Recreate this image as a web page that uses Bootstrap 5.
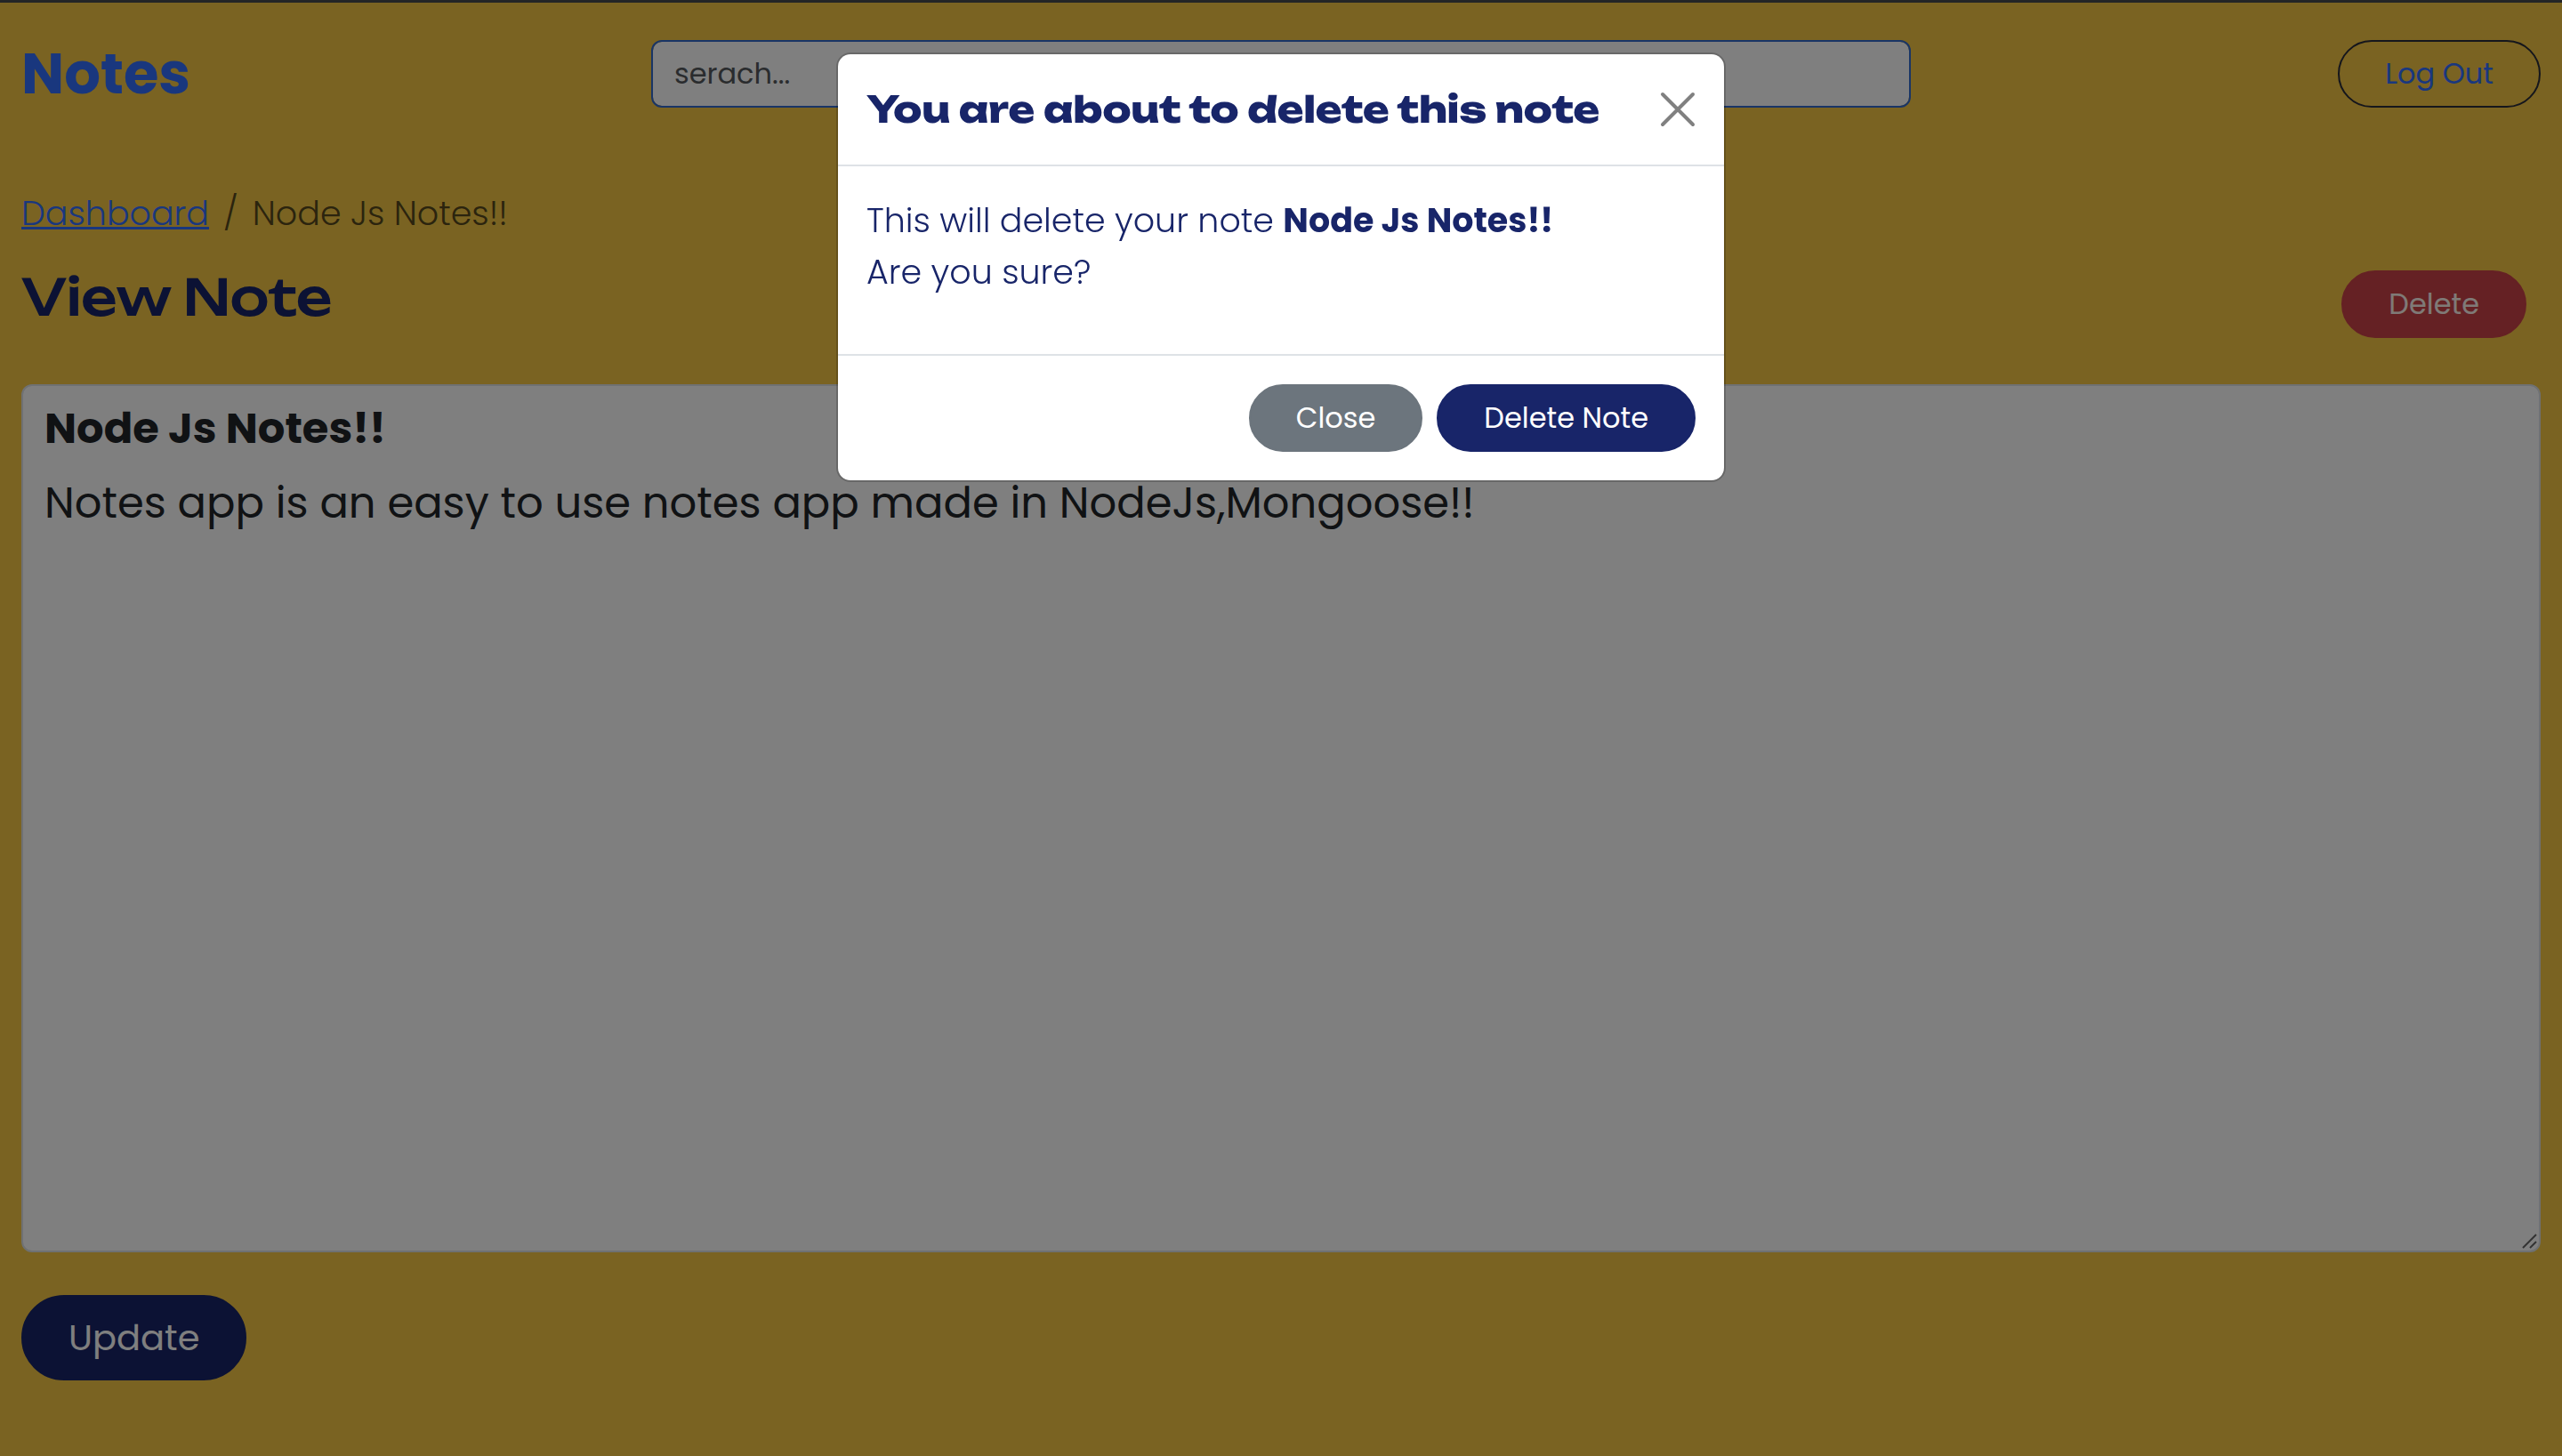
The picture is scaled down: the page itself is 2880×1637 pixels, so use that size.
<!DOCTYPE html>
<html lang="en">
<head>
<meta charset="utf-8">
<meta name="viewport" content="width=device-width, initial-scale=1">
<title>View Note</title>
<link href="https://cdn.jsdelivr.net/npm/bootstrap@5.3.0/dist/css/bootstrap.min.css" rel="stylesheet">
<style>
  html { font-size: 32px; }
  body {
    font-family: "Poppins", "Inter", sans-serif;
    background: #f4c644;
    border-top: 3px solid #484a4c;
    min-height: 100vh;
    --navy: #182569;
    --brand: #326efc;
  }
  .page { padding: 0 24px; }
  .site-header { padding: 42px 0 89px; }
  .brand { font-size: 64px; font-weight: 700; line-height: 76px; color: var(--brand); }
  .search-box {
    font-size: 32px; line-height: 48px; padding: 12px 24px;
    border: 2px solid #326acc; border-radius: 12px; color: #212529;
  }
  .search-box::placeholder { color: #55585c; }
  .btn-pill {
    font-size: 32px; line-height: 48px; padding: 12px 51px;
    border-width: 2px; border-radius: 50px;
  }
  .btn-pill-lg { font-size: 40px; line-height: 60px; padding: 16px 51px; }
  .btn-navy, .btn-navy:hover { background: var(--navy); border-color: var(--navy); color: #fff; }
  .btn-logout { border-color: #2a2c38; color: var(--brand); }
  .btn-remove, .btn-remove:hover { background: #ca4248; border-color: #ca4248; color: #fff4ee; }
  .breadcrumb { font-size: 38px; font-weight: 300; line-height: 60px; margin-bottom: 34px; --bs-breadcrumb-item-padding-x: 16px; --bs-breadcrumb-divider-color: #57481c; --bs-breadcrumb-item-active-color: #57481c; }
  .breadcrumb a { color: var(--brand); }
  .wide-heading { font-family: "Unbounded", "DejaVu Sans", sans-serif; color: var(--navy); margin: 0; }
  .page-title { font-size: 56px; font-weight: 500; line-height: 60px; }
  .note-head { margin-bottom: 52px; }
  .note-editor { border: 2px solid #dee2e6; border-radius: 12px; background: #fff; margin-bottom: 48px; }
  .note-field { border: 0; background: transparent; color: #212529; font-size: 48px; line-height: 72px; padding: 12px 24px 8px; }
  .note-name { font-weight: 700; }
  .note-text { padding-top: 4px; height: 880px; resize: none; }
  .grip { position: absolute; right: 1px; bottom: 1px; width: 18px; height: 18px; }
  .modal-backdrop { --bs-backdrop-bg: #000; --bs-backdrop-opacity: .5; }
  .modal-dialog { max-width: 1000px; margin-top: 59px; }
  .modal-content { border: 2px solid rgba(0,0,0,.18); background-clip: padding-box; border-radius: 16px; color: var(--navy); }
  .modal-header, .modal-body, .modal-footer { padding: 32px; }
  .modal-header { border-bottom: 2px solid #dee2e6; }
  .modal-footer { border-top: 2px solid #dee2e6; gap: 16px; }
  .modal-footer > * { margin: 0; }
  .modal-title { font-size: 40px; font-weight: 800; line-height: 60px; }
  .modal-body p { font-size: 38px; font-weight: 300; line-height: 58px; margin-bottom: 31px; }
  .modal-body strong { font-weight: 700; }
  .close-x { width: 40px; height: 40px; padding: 0; border: 0; background: none; color: #808080; line-height: 0; }
</style>
</head>
<body>
<div class="page">
  <header class="site-header row g-0 align-items-center">
    <div class="col-3"><a href="#" class="brand d-block text-decoration-none">Notes</a></div>
    <div class="col-6"><input type="search" class="search-box form-control" placeholder="serach..." aria-label="Search notes"></div>
    <div class="col-3 text-end"><a href="#" class="btn btn-pill btn-logout">Log Out</a></div>
  </header>

  <nav aria-label="breadcrumb">
    <ol class="breadcrumb">
      <li class="breadcrumb-item"><a href="#">Dashboard</a></li>
      <li class="breadcrumb-item active" aria-current="page">Node Js Notes!!</li>
    </ol>
  </nav>

  <div class="note-head d-flex justify-content-between align-items-start">
    <h1 class="wide-heading page-title">View Note</h1>
    <button type="button" class="btn btn-remove btn-pill me-2">Delete</button>
  </div>

  <form>
    <div class="note-editor position-relative">
      <input type="text" class="note-field note-name d-block w-100" value="Node Js Notes!!" aria-label="Note title">
      <textarea class="note-field note-text d-block w-100" aria-label="Note body" spellcheck="false">Notes app is an easy to use notes app made in NodeJs,Mongoose!!</textarea>
      <svg class="grip" viewBox="0 0 18 18" fill="none" stroke="#666" stroke-width="2" aria-hidden="true"><path d="M1 16 16 1M9 16l7-7"/></svg>
    </div>
    <button type="button" class="btn btn-navy btn-pill btn-pill-lg">Update</button>
  </form>
</div>

<div class="modal-backdrop show"></div>
<div class="modal d-block" tabindex="-1" role="dialog" aria-modal="true" aria-labelledby="deleteTitle">
  <div class="modal-dialog">
    <div class="modal-content">
      <div class="modal-header">
        <h2 class="wide-heading modal-title" id="deleteTitle">You are about to delete this note</h2>
        <button type="button" class="close-x" aria-label="Close dialog">
          <svg width="40" height="40" viewBox="0 0 40 40" fill="none" stroke="currentColor" stroke-width="4" stroke-linecap="round"><path d="M3 3l34 34M37 3 3 37"/></svg>
        </button>
      </div>
      <div class="modal-body">
        <p>This will delete your note <strong>Node Js Notes!!</strong><br>Are you sure?</p>
      </div>
      <div class="modal-footer">
        <button type="button" class="btn btn-secondary btn-pill">Close</button>
        <button type="button" class="btn btn-navy btn-pill">Delete Note</button>
      </div>
    </div>
  </div>
</div>
<script src="https://cdn.jsdelivr.net/npm/bootstrap@5.3.0/dist/js/bootstrap.bundle.min.js"></script>
</body>
</html>
